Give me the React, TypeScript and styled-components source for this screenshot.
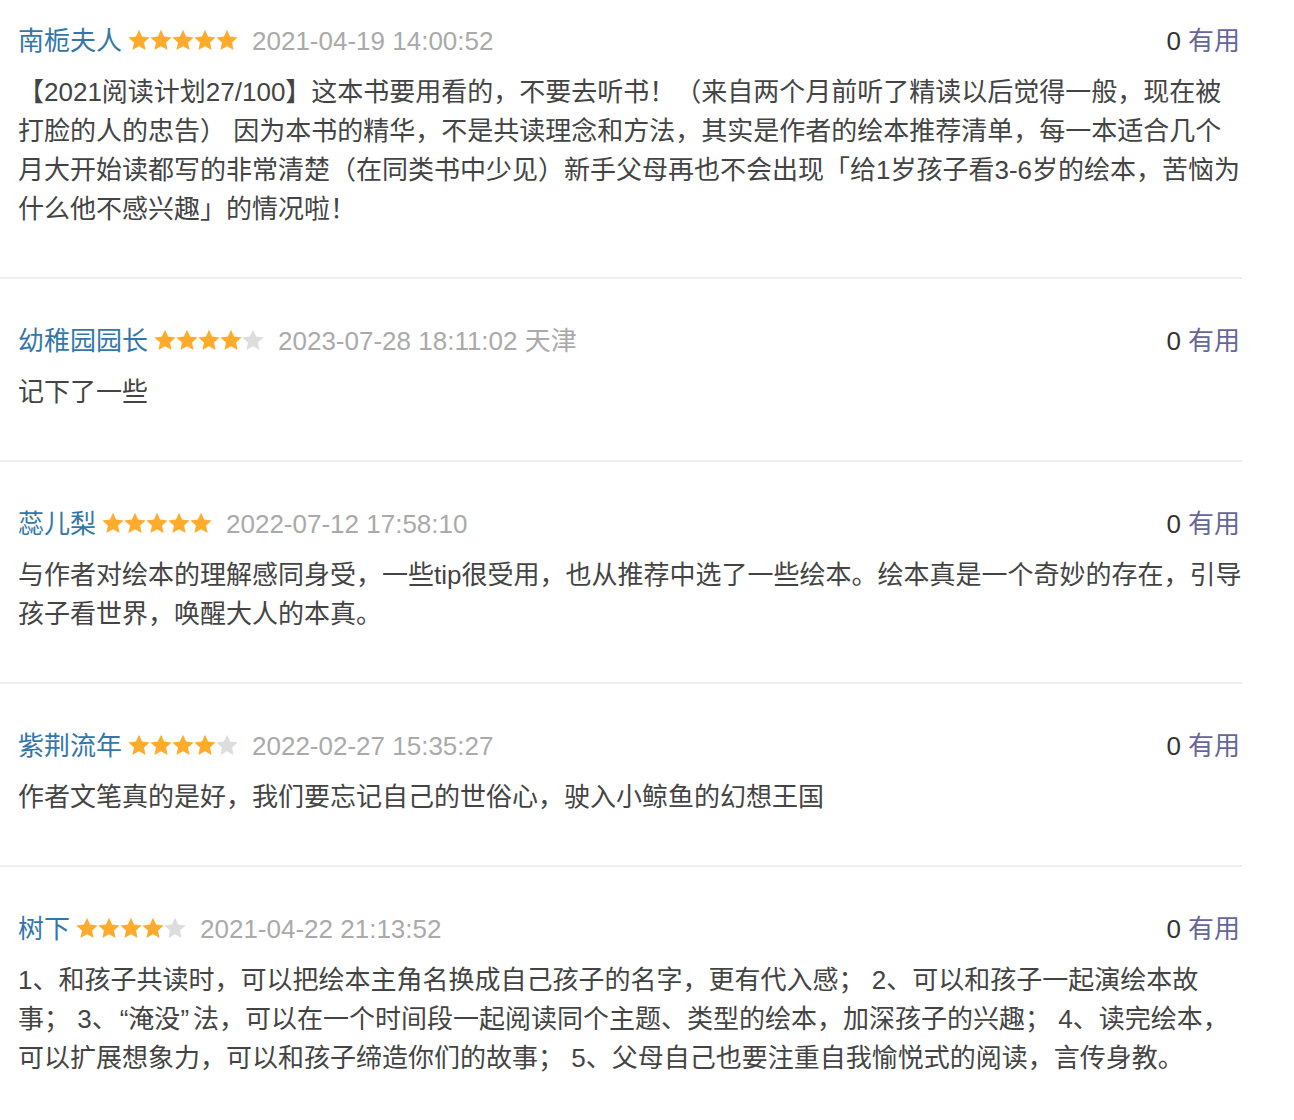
import React from "react";
import styled, { createGlobalStyle } from "styled-components";

const GlobalStyle = createGlobalStyle`
  html, body {
    margin: 0;
    padding: 0;
    background: #ffffff;
  }
  body {
    font-family: "Liberation Sans", "Noto Sans CJK SC", sans-serif;
  }
`;

const List = styled.div`
  width: 1242px;
  font-family: "Liberation Sans", "Noto Sans CJK SC", sans-serif;
  font-size: 26px;
  line-height: 39px;
`;

const Item = styled.div<{ $first?: boolean }>`
  padding: ${(p) => (p.$first ? "22px" : "43px")} 0 48px 18px;
  border-bottom: 2px solid #eeeeee;
`;

const Header = styled.div`
  display: flex;
  align-items: center;
  white-space: nowrap;
  height: 39px;
  padding-right: 2px;
`;

const Name = styled.a`
  color: #3377aa;
  text-decoration: none;
`;

const Stars = styled.span`
  display: inline-flex;
  margin: 0 14px 3px 6px;
`;

const StarCell = styled.svg`
  display: block;
  width: 22px;
  height: 22px;
`;

const Meta = styled.span`
  color: #aaaaaa;
`;

const Votes = styled.span`
  margin-left: auto;
  color: #333333;
`;

const Useful = styled.a`
  color: #666699;
  margin-left: 7px;
  text-decoration: none;
`;

const Body = styled.p`
  margin: 12px 0 0;
  color: #444444;
  word-break: normal;
  line-break: strict;
`;

const OpenQuote = styled.span`
  margin-left: 2px;
`;

const CloseQuote = styled.span`
  margin-right: 4px;
`;

function starPath(cx: number, cy: number, R: number, r: number) {
  const pts: string[] = [];
  for (let i = 0; i < 10; i++) {
    const ang = -Math.PI / 2 + (i * Math.PI) / 5;
    const rad = i % 2 === 0 ? R : r;
    pts.push(`${(cx + rad * Math.cos(ang)).toFixed(2)} ${(cy + rad * Math.sin(ang)).toFixed(2)}`);
  }
  return "M" + pts.join(" L") + " Z";
}

const STAR_PATH = starPath(11, 11.9, 11.2, 5.3);

function Star({ on }: { on: boolean }) {
  return (
    <StarCell viewBox="0 0 22 22">
      <path d={STAR_PATH} fill={on ? "#ffac2d" : "#dddddd"} />
    </StarCell>
  );
}

function Rating({ value }: { value: number }) {
  return (
    <Stars>
      {[0, 1, 2, 3, 4].map((i) => (
        <Star key={i} on={i < value} />
      ))}
    </Stars>
  );
}

function renderText(text: string) {
  const parts: React.ReactNode[] = [];
  let buf = "";
  let k = 0;
  for (const ch of text) {
    if (ch === "\u201C" || ch === "\u201D") {
      if (buf) parts.push(buf);
      buf = "";
      parts.push(
        ch === "\u201C" ? (
          <OpenQuote key={k++}>{ch}</OpenQuote>
        ) : (
          <CloseQuote key={k++}>{ch}</CloseQuote>
        )
      );
    } else {
      buf += ch;
    }
  }
  if (buf) parts.push(buf);
  return parts;
}

type Comment = {
  name: string;
  rating: number;
  meta: string;
  votes: number;
  text: string;
};

const comments: Comment[] = [
  {
    name: "南栀夫人",
    rating: 5,
    meta: "2021-04-19 14:00:52",
    votes: 0,
    text:
      "【2021阅读计划27/100】这本书要用看的，不要去听书！（来自两个月前听了精读以后觉得一般，现在被打脸的人的忠告） 因为本书的精华，不是共读理念和方法，其实是作者的绘本推荐清单，每一本适合几个月大开始读都写的非常清楚（在同类书中少见）新手父母再也不会出现「给1岁孩子看3-6岁的绘本，苦恼为什么他不感兴趣」的情况啦！",
  },
  {
    name: "幼稚园园长",
    rating: 4,
    meta: "2023-07-28 18:11:02 天津",
    votes: 0,
    text: "记下了一些",
  },
  {
    name: "蕊儿梨",
    rating: 5,
    meta: "2022-07-12 17:58:10",
    votes: 0,
    text:
      "与作者对绘本的理解感同身受，一些tip很受用，也从推荐中选了一些绘本。绘本真是一个奇妙的存在，引导孩子看世界，唤醒大人的本真。",
  },
  {
    name: "紫荆流年",
    rating: 4,
    meta: "2022-02-27 15:35:27",
    votes: 0,
    text: "作者文笔真的是好，我们要忘记自己的世俗心，驶入小鲸鱼的幻想王国",
  },
  {
    name: "树下",
    rating: 4,
    meta: "2021-04-22 21:13:52",
    votes: 0,
    text:
      "1、和孩子共读时，可以把绘本主角名换成自己孩子的名字，更有代入感； 2、可以和孩子一起演绘本故事； 3、\u201C淹没\u201D法，可以在一个时间段一起阅读同个主题、类型的绘本，加深孩子的兴趣； 4、读完绘本，可以扩展想象力，可以和孩子缔造你们的故事； 5、父母自己也要注重自我愉悦式的阅读，言传身教。",
  },
];

export default function App() {
  return (
    <>
      <GlobalStyle />
      <List>
        {comments.map((c, i) => (
          <Item key={i} $first={i === 0}>
            <Header>
              <Name href="#">{c.name}</Name>
              <Rating value={c.rating} />
              <Meta>{c.meta}</Meta>
              <Votes>{c.votes}</Votes>
              <Useful href="#">有用</Useful>
            </Header>
            <Body>{renderText(c.text)}</Body>
          </Item>
        ))}
      </List>
    </>
  );
}
